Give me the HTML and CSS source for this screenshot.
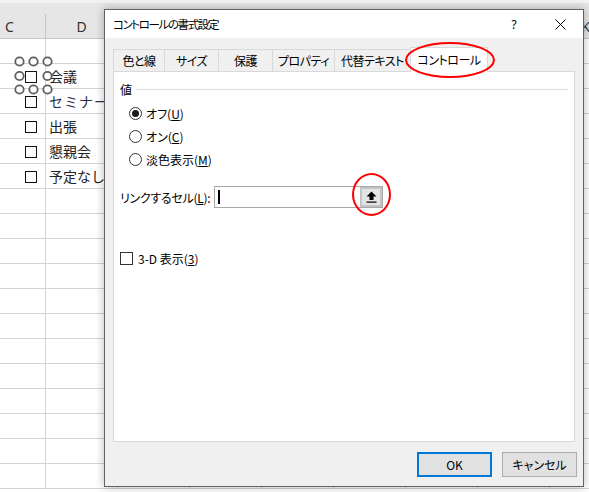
FILE: index.html
```html
<!DOCTYPE html>
<html lang="ja">
<head>
<meta charset="utf-8">
<title>コントロールの書式設定</title>
<link rel="stylesheet" href="styles.css">
</head>
<body>
<div class="sheet">
  <div class="sheet-top"></div>
  <div class="row header">
    <div class="cell c">C</div><div class="cell">D</div><div class="cell"></div><div class="cell"></div><div class="cell"></div><div class="cell"></div><div class="cell"></div><div class="cell"></div><div class="cell">K</div>
  </div>
  <div class="row"><div class="cell c"></div><div class="cell"></div><div class="cell"></div><div class="cell"></div><div class="cell"></div><div class="cell"></div><div class="cell"></div><div class="cell"></div><div class="cell"></div></div>
  <div class="row"><div class="cell c"><span class="xbox"></span></div><div class="cell d">会議</div><div class="cell"></div><div class="cell"></div><div class="cell"></div><div class="cell"></div><div class="cell"></div><div class="cell"></div><div class="cell"></div></div>
  <div class="row"><div class="cell c"><span class="xbox"></span></div><div class="cell d wide">セミナー</div><div class="cell"></div><div class="cell"></div><div class="cell"></div><div class="cell"></div><div class="cell"></div><div class="cell"></div><div class="cell"></div></div>
  <div class="row"><div class="cell c"><span class="xbox"></span></div><div class="cell d">出張</div><div class="cell"></div><div class="cell"></div><div class="cell"></div><div class="cell"></div><div class="cell"></div><div class="cell"></div><div class="cell"></div></div>
  <div class="row"><div class="cell c"><span class="xbox"></span></div><div class="cell d">懇親会</div><div class="cell"></div><div class="cell"></div><div class="cell"></div><div class="cell"></div><div class="cell"></div><div class="cell"></div><div class="cell"></div></div>
  <div class="row"><div class="cell c"><span class="xbox"></span></div><div class="cell d">予定なし</div><div class="cell"></div><div class="cell"></div><div class="cell"></div><div class="cell"></div><div class="cell"></div><div class="cell"></div><div class="cell"></div></div>
  <div class="row"><div class="cell c"></div><div class="cell"></div><div class="cell"></div><div class="cell"></div><div class="cell"></div><div class="cell"></div><div class="cell"></div><div class="cell"></div><div class="cell"></div></div>
  <div class="row"><div class="cell c"></div><div class="cell"></div><div class="cell"></div><div class="cell"></div><div class="cell"></div><div class="cell"></div><div class="cell"></div><div class="cell"></div><div class="cell"></div></div>
  <div class="row"><div class="cell c"></div><div class="cell"></div><div class="cell"></div><div class="cell"></div><div class="cell"></div><div class="cell"></div><div class="cell"></div><div class="cell"></div><div class="cell"></div></div>
  <div class="row"><div class="cell c"></div><div class="cell"></div><div class="cell"></div><div class="cell"></div><div class="cell"></div><div class="cell"></div><div class="cell"></div><div class="cell"></div><div class="cell"></div></div>
  <div class="row"><div class="cell c"></div><div class="cell"></div><div class="cell"></div><div class="cell"></div><div class="cell"></div><div class="cell"></div><div class="cell"></div><div class="cell"></div><div class="cell"></div></div>
  <div class="row"><div class="cell c"></div><div class="cell"></div><div class="cell"></div><div class="cell"></div><div class="cell"></div><div class="cell"></div><div class="cell"></div><div class="cell"></div><div class="cell"></div></div>
  <div class="row"><div class="cell c"></div><div class="cell"></div><div class="cell"></div><div class="cell"></div><div class="cell"></div><div class="cell"></div><div class="cell"></div><div class="cell"></div><div class="cell"></div></div>
  <div class="row"><div class="cell c"></div><div class="cell"></div><div class="cell"></div><div class="cell"></div><div class="cell"></div><div class="cell"></div><div class="cell"></div><div class="cell"></div><div class="cell"></div></div>
  <div class="row"><div class="cell c"></div><div class="cell"></div><div class="cell"></div><div class="cell"></div><div class="cell"></div><div class="cell"></div><div class="cell"></div><div class="cell"></div><div class="cell"></div></div>
  <div class="row"><div class="cell c"></div><div class="cell"></div><div class="cell"></div><div class="cell"></div><div class="cell"></div><div class="cell"></div><div class="cell"></div><div class="cell"></div><div class="cell"></div></div>
  <div class="row"><div class="cell c"></div><div class="cell"></div><div class="cell"></div><div class="cell"></div><div class="cell"></div><div class="cell"></div><div class="cell"></div><div class="cell"></div><div class="cell"></div></div>
  <div class="row"><div class="cell c"></div><div class="cell"></div><div class="cell"></div><div class="cell"></div><div class="cell"></div><div class="cell"></div><div class="cell"></div><div class="cell"></div><div class="cell"></div></div>
</div>

<svg class="handles" width="39" height="39" viewBox="0 0 39 39">
  <g fill="#fff" stroke="#5e5e5e" stroke-width="1.8">
    <circle cx="5.5" cy="5.5" r="4.2"/><circle cx="19.5" cy="5.5" r="4.2"/><circle cx="33.5" cy="5.5" r="4.2"/>
    <circle cx="5.5" cy="20" r="4.2"/><circle cx="33.5" cy="20" r="4.2"/>
    <circle cx="5.5" cy="33.5" r="4.2"/><circle cx="19.5" cy="33.5" r="4.2"/><circle cx="33.5" cy="33.5" r="4.2"/>
  </g>
</svg>

<div class="dialog">
  <div class="titlebar">
    <span class="title">コントロールの書式設定</span>
    <span class="tb-btn help">?</span>
    <span class="tb-btn close">
      <svg width="11" height="11" viewBox="0 0 11 11"><path d="M0.5 0.5 L10.5 10.5 M10.5 0.5 L0.5 10.5" stroke="#000" stroke-width="1" fill="none"/></svg>
    </span>
  </div>
  <div class="dlg-body">
    <div class="tabs">
      <div class="tab t1">色と線</div>
      <div class="tab t2">サイズ</div>
      <div class="tab t3">保護</div>
      <div class="tab t4">プロパティ</div>
      <div class="tab t5">代替テキスト</div>
      <div class="tab active">コントロール</div>
    </div>
    <div class="panel">
      <div class="group-head"><span>値</span><span class="rule"></span></div>
      <div class="radios">
        <div class="radio-row"><span class="radio checked"></span><span>オフ(<u>U</u>)</span></div>
        <div class="radio-row"><span class="radio"></span><span>オン(<u>C</u>)</span></div>
        <div class="radio-row"><span class="radio"></span><span>淡色表示(<u>M</u>)</span></div>
      </div>
      <div class="link-row">
        <span class="link-label">リンクするセル(<u>L</u>):</span>
        <div class="ref-input">
          <span class="caret"></span>
          <span class="ref-btn">
            <svg width="11" height="12" viewBox="0 0 11 12"><path d="M5.5 0.5 L10.5 5.5 L7.5 5.5 L7.5 9 L3.5 9 L3.5 5.5 L0.5 5.5 Z" fill="#000"/><rect x="0.5" y="10.5" width="10" height="1.2" fill="#000"/></svg>
          </span>
        </div>
      </div>
      <div class="check-row"><span class="cbox"></span><span>3-D 表示(<u>3</u>)</span></div>
    </div>
    <div class="buttons">
      <span class="btn default">OK</span>
      <span class="btn">キャンセル</span>
    </div>
  </div>
</div>

<div class="mark mark-tab"></div>
<div class="mark mark-btn"></div>
</body>
</html>
```

FILE: styles.css
```css
html, body {
  margin: 0;
  padding: 0;
}
body {
  width: 589px;
  height: 492px;
  overflow: hidden;
  position: relative;
  background: #fff;
  font-family: "Noto Sans CJK JP", "Noto Sans", sans-serif;
  font-feature-settings: "palt";
}

/* spreadsheet */
.sheet {
  width: 589px;
  overflow: hidden;
}
.sheet-top {
  height: 14px;
  box-sizing: border-box;
  background: #e6e6e6;
  border-top: 3px solid #f2f2f2;
}
.row {
  display: grid;
  grid-template-columns: 46px repeat(8, 72px);
  height: 25px;
  box-sizing: border-box;
  border-bottom: 1px solid #d4d4d4;
}
.row.header {
  background: #e6e6e6;
  border-bottom: 1px solid #c6c6c6;
}
.cell {
  border-right: 1px solid #d4d4d4;
  display: flex;
  align-items: center;
  white-space: nowrap;
  font-size: 14px;
  color: #222;
}
.header .cell {
  justify-content: center;
  border-right-color: #c6c6c6;
  font-family: "Noto Sans", sans-serif;
  font-size: 14px;
  color: #333;
}
.header .cell.c {
  justify-content: flex-start;
  padding-left: 5px;
}
.cell.d {
  padding-left: 3px;
  overflow: visible;
  font-feature-settings: normal;
}
.cell.wide {
  letter-spacing: 1px;
  color: #2e2e4a;
}
.xbox {
  width: 12px;
  height: 12px;
  box-sizing: border-box;
  border: 1px solid #111;
  background: #fff;
  margin-left: 25px;
  margin-top: 2px;
}

.handles {
  position: absolute;
  left: 14px;
  top: 56px;
}

/* dialog */
.dialog {
  position: absolute;
  left: 104px;
  top: 9px;
  width: 480px;
  height: 478px;
  box-sizing: border-box;
  border: 1px solid #636363;
  background: #f0f0f0;
  box-shadow: 0 0 9px rgba(0, 0, 0, 0.28);
  display: flex;
  flex-direction: column;
  font-size: 12px;
  color: #000;
}
.titlebar {
  height: 28px;
  background: #fff;
  display: flex;
  align-items: center;
}
.title {
  margin-right: auto;
  padding-left: 8px;
  font-size: 11.5px;
  letter-spacing: -1.4px;
  white-space: nowrap;
}
.tb-btn {
  width: 46px;
  height: 28px;
  display: flex;
  align-items: center;
  justify-content: center;
}
.help {
  font-family: "Noto Sans", sans-serif;
  font-size: 12px;
}
.dlg-body {
  flex: 1;
  display: flex;
  flex-direction: column;
  padding: 9px 8px 9px 8px;
}
.tabs {
  display: flex;
  align-items: flex-end;
  height: 24px;
  position: relative;
  z-index: 1;
}
.tab {
  height: 22px;
  box-sizing: border-box;
  border: 1px solid #d9d9d9;
  border-bottom: none;
  margin-right: -1px;
  display: flex;
  align-items: center;
  justify-content: center;
  background: #f0f0f0;
  white-space: nowrap;
  letter-spacing: -0.5px;
}
.t1 { width: 52px; }
.t2 { width: 55px; }
.t3 { width: 55px; }
.t4 { width: 63px; }
.t5 { width: 77px; }
.tab.active {
  width: 78px;
  height: 25px;
  margin-bottom: -1px;
  padding-bottom: 2px;
  background: #fff;
}
.panel {
  flex: 1;
  background: #fff;
  border: 1px solid #d9d9d9;
  padding: 0 6px;
}
.group-head {
  margin-top: 9px;
  height: 16px;
  display: flex;
  align-items: center;
}
.rule {
  flex: 1;
  margin-left: 4px;
  border-top: 1px solid #dcdcdc;
}
.radios {
  margin-top: 5px;
  padding-left: 9px;
}
.radio-row {
  height: 23px;
  display: flex;
  align-items: center;
  gap: 4px;
}
.radio {
  width: 13px;
  height: 13px;
  box-sizing: border-box;
  border: 1px solid #333;
  border-radius: 50%;
  display: flex;
  align-items: center;
  justify-content: center;
}
.radio.checked::after {
  content: "";
  width: 7px;
  height: 7px;
  border-radius: 50%;
  background: #1a1a1a;
}
.link-row {
  margin-top: 15px;
  display: flex;
  align-items: center;
  height: 22px;
}
.link-label {
  width: 94px;
  letter-spacing: -0.3px;
}
.ref-input {
  width: 169px;
  height: 22px;
  box-sizing: border-box;
  border: 1px solid #a8a8a8;
  display: flex;
  align-items: center;
  justify-content: space-between;
}
.caret {
  width: 2px;
  height: 14px;
  background: #000;
  margin-left: 3px;
}
.ref-btn {
  width: 22px;
  height: 20px;
  box-sizing: border-box;
  border: 2px solid #c4c4c4;
  background: #e4e4e4;
  display: flex;
  align-items: center;
  justify-content: center;
}
.check-row {
  margin-top: 42px;
  height: 16px;
  display: flex;
  align-items: center;
  gap: 5px;
}
.cbox {
  width: 13px;
  height: 13px;
  box-sizing: border-box;
  border: 1px solid #333;
  background: #fff;
}
.buttons {
  margin-top: 10px;
  margin-right: -2px;
  display: flex;
  justify-content: flex-end;
  gap: 10px;
}
.btn {
  width: 75px;
  height: 25px;
  box-sizing: border-box;
  border: 1px solid #adadad;
  background: #e1e1e1;
  display: flex;
  align-items: center;
  justify-content: center;
  font-size: 12px;
}
.btn.default {
  border: 2px solid #0078d7;
}

/* red annotation marks */
.mark {
  position: absolute;
  border: 2px solid #f00;
  border-radius: 50%;
  box-sizing: border-box;
  z-index: 5;
}
.mark-tab {
  left: 405px;
  top: 42px;
  width: 90px;
  height: 36px;
}
.mark-btn {
  left: 352px;
  top: 173px;
  width: 39px;
  height: 43px;
}
```
